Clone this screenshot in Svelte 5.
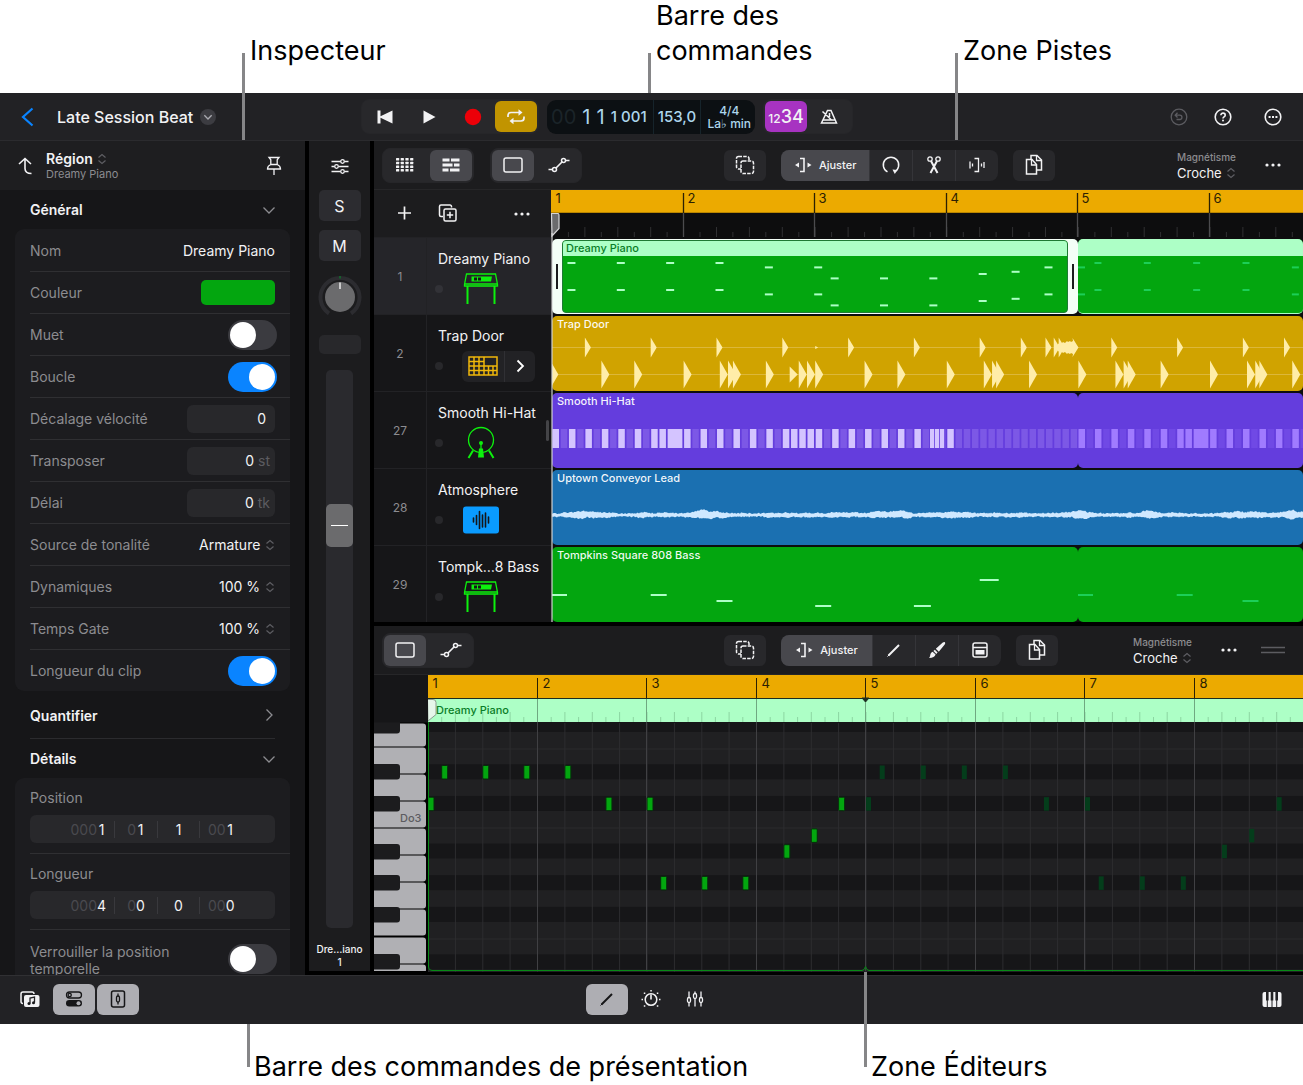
<script lang="ts">
	type Note = [step: number, row: number];

	// width of one sixteenth in the tracks area and in the piano roll
	const STEP = 8.225;
	const ROLL_STEP = 6.844;
	const ROLL_ROW = 15.84;
	const LOOP = 64;

	const piano: Note[] = [
		[0, 2], [2, 0], [8, 0], [14, 0], [20, 0], [26, 2], [32, 2],
		[34, 7], [40, 7], [46, 7], [52, 5], [56, 4], [60, 2]
	];
	const bass = [
		{ step: 0, y: 47, w: 15 },
		{ step: 12, y: 47, w: 16 },
		{ step: 20, y: 53, w: 16 },
		{ step: 32, y: 58, w: 16 },
		{ step: 44, y: 58, w: 17 },
		{ step: 52, y: 32, w: 19 }
	];
	const snare = [4, 12, 20, 28, 36, 44, 52, 57, 60, 61, 61.6, 68, 76, 84, 89];
	const kick = [
		-0.2, 6, 10, 16, 20.4, 21.4, 22, 26, 30, 31, 32, 38, 42, 48, 52.5, 53.5, 54, 58, 64,
		68.5, 69.5, 70, 74, 80, 84.5, 85.5, 86, 90
	];
	const accents = [13, 15, 29, 31];

	const hats = Array.from({ length: LOOP }, (_, s) => ({
		x: s * STEP + 0.5,
		w: s === 14 ? 14 : 6.5,
		loud: s <= 48 && s !== 46 && (s % 2 === 0 || accents.includes(s))
	}));

	function noise(n: number) {
		const v = Math.sin(n * 127.1 + 3.7) * 43758.5453;
		return v - Math.floor(v);
	}

	function swell(x: number, size: number) {
		const i = Math.floor(x / size);
		const t = x / size - i;
		return noise(i) * (1 - t) + noise(i + 1) * t;
	}

	const wave = (() => {
		const up: string[] = [];
		const down: string[] = [];
		for (let x = 0; x <= 1800; x += 1) {
			const env = swell(x, 13) * swell(x + 900, 31) * 6;
			const top = 0.8 + env * (0.3 + swell(x + 40, 6) * 0.7) + noise(x) * 1.4;
			const bottom = 0.8 + env * (0.2 + swell(x + 70, 5) * 0.7) + noise(x + 5000) * 1.4;
			up.push(`${x},${(45 - top).toFixed(1)}`);
			down.unshift(`${x},${(45 + bottom).toFixed(1)}`);
		}
		return up.concat(down).join(' ');
	})();

	const tracks = [
		{ no: 1, name: 'Dreamy Piano', art: 'keys' },
		{ no: 2, name: 'Trap Door', art: 'pads' },
		{ no: 27, name: 'Smooth Hi-Hat', art: 'drum' },
		{ no: 28, name: 'Atmosphere', art: 'audio' },
		{ no: 29, name: 'Tompk…8 Bass', art: 'keys' }
	];

	const darkRows = [-3, 0, 2, 5, 7, 9, 12];
	const whiteKeys = [720, 747, 774, 801, 828, 855, 882, 909, 937, 964];
	const blackKeys = [718, 764, 796, 844, 875, 907, 954];

	let timelineWidth = $state(752);
	let rollWidth = $state(875);
	let bars = $derived(range((timelineWidth - 14) / (16 * STEP)));
	let rollBars = $derived(range((rollWidth - 14) / (16 * ROLL_STEP)));
	let eighths = $derived(range(timelineWidth / (2 * STEP)));
	let rollEighths = $derived(range(rollWidth / (2 * ROLL_STEP)));

	let mute = $state(false);
	let loop = $state(true);
	let clipLength = $state(true);
	let lock = $state(false);
	let volume = $state(74);
	let pan = $state(0);

	function range(n: number) {
		return Array.from({ length: Math.max(1, Math.ceil(n)) }, (_, i) => i);
	}
</script>

{#snippet icon(name: string)}
	<svg class="icon" viewBox="0 0 24 24" aria-hidden="true">
		{#if name === 'back'}
			<path d="M17.500 3.500 8 12l9.500 8.500" stroke-width="2.2" />
		{:else if name === 'turn-up'}
			<path d="M11 4.500v10c0 3.200 2 5 6.500 5M5 10l6-5.500 6 5.500" stroke-width="1.600" />
		{:else if name === 'pin'}
			<path d="M7 3.500h10l-1.800 2.300v4.700c2.300 1 3.300 2.400 3.300 4.500h-13c0-2.100 1-3.500 3.300-4.500V5.800zM8.500 10.500h7M12 15v6" />
		{:else if name === 'down'}
			<path d="m6.500 9.500 5.500 5.500 5.500-5.500" />
		{:else if name === 'right'}
			<path d="m9.500 6.500 5.500 5.500-5.500 5.500" />
		{:else if name === 'prev'}
			<path class="solid" d="M4.500 5.500h3v5.800l12-5.800v13l-12-5.800v5.800h-3z" />
		{:else if name === 'play'}
			<path class="solid" d="M6.500 5.500v13l12-6.500z" />
		{:else if name === 'record'}
			<circle class="solid" cx="12" cy="12" r="8.200" />
		{:else if name === 'cycle'}
			<path d="M4 12V10.500c0-2 1-3 3-3h9M20 11.500V13c0 2-1 3-3 3H8" stroke-width="1.700" />
			<path class="solid" d="M14.500 4.300v6.400l4-3.200zM9.500 12.800v6.400l-4-3.200z" />
		{:else if name === 'metronome'}
			<path d="M10.500 5.500h3.500l5.500 12.500H4.500zM6 15h12.500M5.500 6.500l9 8.500M12.500 8v4" stroke-width="1.500" />
		{:else if name === 'undo'}
			<circle cx="12" cy="12" r="7.800" />
			<path d="M9.500 14.500h3.300a2 2 0 0 0 0-4.300H8.500M10.500 7.800l-2.300 2.400 2.300 2.300" />
		{:else if name === 'help'}
			<circle cx="12" cy="12" r="7.800" stroke-width="1.600" />
			<path d="M9.900 10.200c0-2.800 4.300-2.700 4.300 0 0 1.700-2.200 1.600-2.200 3.200" stroke-width="1.600" />
			<circle class="solid" cx="12" cy="15.600" r="1" />
		{:else if name === 'more-circle'}
			<circle cx="12" cy="12" r="7.800" stroke-width="1.600" />
			<path class="solid" d="M7.600 11h2v2h-2zM11 11h2v2h-2zM14.400 11h2v2h-2z" />
		{:else if name === 'more'}
			<circle class="solid" cx="6" cy="12" r="1.600" />
			<circle class="solid" cx="12" cy="12" r="1.600" />
			<circle class="solid" cx="18" cy="12" r="1.600" />
		{:else if name === 'mixer'}
			<path d="M3.500 7.500h9M16.500 7.500h4M3.500 12.500h3M10.500 12.500h10M3.500 17.500h9M16.500 17.500h4" />
			<circle cx="14.500" cy="7.500" r="1.800" />
			<circle cx="8.500" cy="12.500" r="1.800" />
			<circle cx="14.500" cy="17.500" r="1.800" />
		{:else if name === 'grid'}
			{#each [0, 1, 2, 3] as r}
				{#each [0, 1, 2, 3] as c}
					<rect class="solid" x={3 + c * 4.700} y={5 + r * 3.700} width="3.200" height="2.500" rx="0.500" />
				{/each}
			{/each}
		{:else if name === 'bricks'}
			<path class="solid" d="M3.500 5.500h7v3h-7zM12 5.500h8.500v3H12zM3.500 10.500h10v3h-10zM15 10.500h5.500v3H15zM3.500 15.500h6v3h-6zM11 15.500h9.500v3H11z" />
		{:else if name === 'region'}
			<rect x="3" y="5" width="18" height="14" rx="2" stroke-width="1.500" />
		{:else if name === 'curve'}
			<path d="M1.500 16.500h4M9 15l6.500-6.500M18.500 7.500h4" stroke-width="1.600" />
			<circle cx="7.500" cy="16.500" r="2" stroke-width="1.500" />
			<circle cx="16.500" cy="7.500" r="2" stroke-width="1.500" />
		{:else if name === 'marquee'}
			<rect x="3.500" y="3.500" width="12.500" height="12.500" rx="2" stroke-width="1.500" stroke-dasharray="3.500 1.200" />
			<rect class="cover" x="8" y="8" width="12.500" height="12.500" rx="2" stroke-width="1.500" stroke-dasharray="3.500 1.200" />
		{:else if name === 'trim'}
			<path d="M10 5.500h4v13h-4" stroke-width="1.600" />
			<path class="solid" d="M9 9.500v5L5 12zM17.500 9.500v5l4-2.500z" />
		{:else if name === 'arc'}
			<path d="M8.500 18.800a7.700 7.700 0 1 1 7 0" stroke-width="1.500" />
			<path class="solid" d="m13.500 16.500 4.800.500-2.500 4z" />
		{:else if name === 'scissors'}
			<circle cx="8" cy="6" r="2.200" />
			<circle cx="16" cy="6" r="2.200" />
			<path d="M9 8l6.500 12M15 8 8.500 20" stroke-width="2" />
		{:else if name === 'split'}
			<path d="M9.500 5.500h4v13h-4M5 8.500v7M16.500 10.500v3M19 9v6M7.500 10.500v3" />
		{:else if name === 'copy'}
			<path class="cover" d="M9 2.500h6l4.500 4.500v10H9z" stroke-width="1.500" />
			<path d="M14.500 2.500V7.500h5" />
			<path class="cover" d="M4.500 6.500H10l4.500 5v9.500h-10z" stroke-width="1.500" />
			<path d="M9.500 6.500V12h5" />
		{:else if name === 'plus'}
			<path d="M12.500 4.500v13M6 11h13" stroke-width="1.700" />
		{:else if name === 'duplicate'}
			<path d="M7 14.500H5a1.500 1.500 0 0 1-1.500-1.500V4.500A1.500 1.500 0 0 1 5 3h9a1.500 1.500 0 0 1 1.500 1.500v1" stroke-width="1.500" />
			<rect x="8" y="7" width="12" height="12" rx="1.500" stroke-width="1.500" />
			<path d="M14 9.800v6.400M10.800 13h6.400" stroke-width="1.500" />
		{:else if name === 'pencil'}
			<path d="M6.500 17.500 17 7" stroke-width="2" />
			<path d="m5.500 18.500 2-2" stroke-width="1" />
		{:else if name === 'brush'}
			<path class="solid" d="M19.500 4c1 .6.900 1.500 0 2.800l-5.700 7-3-3 7-6.200c.7-.6 1.200-.8 1.700-.6zM9.800 11.700l2.800 2.900-1.300 1.400-2.900-3zM7.600 13.700l3 2.900c-.8 2.200-2.600 3.400-6.600 3.400 1-1 1-1.800 1.300-3.300.3-1.600 1.200-2.500 2.300-3z" />
		{:else if name === 'velocity'}
			<rect x="5" y="5" width="14" height="14" rx="2" stroke-width="1.500" />
			<path d="M5 9.500h14" />
			<path class="solid" d="M7.500 12h9v4.500h-9z" />
		{:else if name === 'grip'}
			<path d="M0 9.500h24M0 14.500h24" />
		{:else if name === 'browser'}
			<path d="M5 16.500c-1.200 0-2-.7-2-2V7c0-1.200.8-2 2-2h9c1.200 0 2 .8 2 2" stroke-width="1.500" />
			<rect class="solid" x="6" y="8" width="15.500" height="12" rx="2" />
			<path class="cut" d="M12 16.500v-5.500l4.500-1v5.500" />
			<circle class="ink" cx="11" cy="16.600" r="1.500" />
			<circle class="ink" cx="15.500" cy="15.700" r="1.500" />
		{:else if name === 'switches'}
			<rect x="4.500" y="5" width="15" height="6" rx="3" />
			<circle cx="7.700" cy="8" r="1.600" />
			<rect class="solid" x="4" y="13" width="16" height="6.500" rx="3.200" />
			<circle class="hole" cx="16.500" cy="16.200" r="2" />
		{:else if name === 'strip'}
			<rect x="5.500" y="4" width="13" height="16" rx="2" stroke-width="1.500" />
			<path d="M12 6.500V9M12 15v2.500" />
			<rect x="10.500" y="9" width="3" height="6" rx="1.500" />
		{:else if name === 'dial'}
			<circle cx="12" cy="12.500" r="5.800" stroke-width="1.500" />
			<path d="M12 7.500v5" stroke-width="1.600" />
			<path class="solid" d="M11.300 3h1.500v1.500h-1.500zM4.800 5.500h1.500V7H4.800zM17.800 5.500h1.500V7h-1.500zM2.500 11.800H4v1.500H2.500zM20 11.800h1.500v1.500H20zM4.800 18.300h1.500v1.500H4.800zM17.800 18.300h1.500v1.500h-1.500z" />
		{:else if name === 'faders'}
			<path d="M6 4.500v6M6 15.500v4M12 4.500v2.500M12 11.500v8M18 4.500v6M18 15.500v4" />
			<rect x="4.500" y="10.500" width="3" height="5" rx="1.500" />
			<rect x="10.500" y="6.500" width="3" height="5" rx="1.500" />
			<rect x="16.500" y="10.500" width="3" height="5" rx="1.500" />
		{:else if name === 'piano'}
			<rect class="solid" x="2.500" y="5" width="19" height="15" rx="2" />
			<path class="cut" d="M7.300 5v8.500M12 5v8.500M16.700 5v8.500" stroke-width="2.600" />
			<path class="cut" d="M7.300 5v15M12 5v15M16.700 5v15" stroke-width="1" />
		{/if}
	</svg>
{/snippet}

{#snippet updown()}
	<svg class="updown" viewBox="0 0 10 12" aria-hidden="true">
		<path d="m1.500 4.500 3.500-3 3.500 3M1.500 7.500l3.500 3 3.500-3" />
	</svg>
{/snippet}

{#snippet snap(id: string)}
	<div class="snap">
		<label for={id}>Magnétisme</label>
		<span class="picker">
			<select {id}><option>Croche</option></select>
			{@render updown()}
		</span>
	</div>
{/snippet}

{#snippet art(kind: string)}
	{#if kind === 'keys'}
		<svg class="art synth" viewBox="0 0 36 34" aria-hidden="true">
			<path d="M3.500 2h29l2 10.500v1.500H1.500v-1.500zM1.500 12h33" />
			<path class="solid" d="M8.500 4.500h20.500l-1 5H8.500z" />
			<path class="ink" d="M11 5.500h3v3h-3zM15 5.500h3v3h-3z" />
			<path d="M4.500 14v18M31.500 14v18" stroke-width="2" />
		</svg>
	{:else if kind === 'drum'}
		<svg class="art synth" viewBox="0 0 36 34" aria-hidden="true">
			<circle cx="18" cy="14" r="12.500" />
			<path d="M10 24.500 5.500 32M26 24.500l4.500 7.500" stroke-width="2" />
			<circle class="solid" cx="18" cy="17" r="2" />
			<path d="M18 17v8" />
			<path class="solid" d="M16 22.500h4l1 9h-6z" />
		</svg>
	{:else if kind === 'audio'}
		<svg class="art" viewBox="0 0 36 34" aria-hidden="true">
			<rect class="tile" x="0" y="3.500" width="36" height="27" rx="3" />
			<path class="bars" d="M10.500 15v4M13.500 12.500v9M16.500 8.500v17M19.500 12v12M22.500 10v14M25.500 14v6" />
		</svg>
	{/if}
{/snippet}

<div class="page">
	<div class="callouts top">
		<span class="callout long">Inspecteur</span>
		<span class="callout">Barre des<br />commandes</span>
		<span class="callout long">Zone Pistes</span>
	</div>

	<main class="app">
		<header class="control-bar">
			<button class="back" aria-label="Retour">{@render icon('back')}</button>
			<button class="project">
				<span>Late Session Beat</span>
				<span class="round">{@render icon('down')}</span>
			</button>
			<i class="space-6"></i>
			<div class="group">
				<button class="tool" aria-label="Début">{@render icon('prev')}</button>
				<button class="tool" aria-label="Lecture">{@render icon('play')}</button>
				<button class="tool rec" aria-label="Enregistrer">{@render icon('record')}</button>
				<button class="tool cycle" aria-label="Cycle">{@render icon('cycle')}</button>
			</div>
			<div class="lcd">
				<span class="beat"><span class="faint">00</span><span>1</span><span>1</span></span>
				<span class="sub">1 001</span>
				<span class="tempo">153,0</span>
				<span class="sig"><span>4/4</span><span>La♭ min</span></span>
			</div>
			<div class="group">
				<button class="tool count" aria-label="Décompte"><small>12</small>34</button>
				<button class="tool" aria-label="Métronome">{@render icon('metronome')}</button>
			</div>
			<i class="space-13"></i>
			<div class="corner">
				<button class="dim" aria-label="Annuler">{@render icon('undo')}</button>
				<button aria-label="Aide">{@render icon('help')}</button>
				<button class="settings" aria-label="Réglages">{@render icon('more-circle')}</button>
			</div>
		</header>

		<div class="work">
			<aside class="inspector">
				<div class="inspector-head">
					<button aria-label="Remonter">{@render icon('turn-up')}</button>
					<div class="what">
						<button class="kind">Région {@render updown()}</button>
						<span>Dreamy Piano</span>
					</div>
					<button aria-label="Épingler">{@render icon('pin')}</button>
				</div>
				<button class="section">Général {@render icon('down')}</button>
				<div class="card">
					<div class="row">
						<label for="nom">Nom</label>
						<input id="nom" class="plain" value="Dreamy Piano" />
					</div>
					<div class="row">
						<span>Couleur</span>
						<button class="swatch" aria-label="Couleur"></button>
					</div>
					<div class="row">
						<label for="muet">Muet</label>
						<input id="muet" type="checkbox" class="switch" bind:checked={mute} />
					</div>
					<div class="row">
						<label for="boucle">Boucle</label>
						<input id="boucle" type="checkbox" class="switch" bind:checked={loop} />
					</div>
					<div class="row">
						<label for="velocite">Décalage vélocité</label>
						<span class="field wide"><input id="velocite" value="0" /></span>
					</div>
					<div class="row">
						<label for="transposer">Transposer</label>
						<span class="field"><input id="transposer" value="0" />st</span>
					</div>
					<div class="row">
						<label for="delai">Délai</label>
						<span class="field"><input id="delai" value="0" />tk</span>
					</div>
					<div class="row">
						<label for="source">Source de tonalité</label>
						<span class="picker">
							<select id="source"><option>Armature</option></select>
							{@render updown()}
						</span>
					</div>
					<div class="row">
						<label for="dyn">Dynamiques</label>
						<span class="picker">
							<select id="dyn"><option>100 %</option></select>
							{@render updown()}
						</span>
					</div>
					<div class="row">
						<label for="gate">Temps Gate</label>
						<span class="picker">
							<select id="gate"><option>100 %</option></select>
							{@render updown()}
						</span>
					</div>
					<div class="row">
						<label for="clip">Longueur du clip</label>
						<input id="clip" type="checkbox" class="switch" bind:checked={clipLength} />
					</div>
				</div>
				<button class="section ruled">Quantifier {@render icon('right')}</button>
				<button class="section">Détails {@render icon('down')}</button>
				<div class="card">
					{#each [{ name: 'Position', v: ['1', '1', '1', '1'] }, { name: 'Longueur', v: ['4', '0', '0', '0'] }] as f}
						<fieldset class="stack">
							<legend>{f.name}</legend>
							<div class="digits">
								{#each ['000', '0', '', '00'] as pad, i}
									<label>{pad}<input aria-label="{f.name} {i + 1}" value={f.v[i]} /></label>
								{/each}
							</div>
						</fieldset>
					{/each}
					<div class="row tall">
						<label for="verrou">Verrouiller la position temporelle</label>
						<input id="verrou" type="checkbox" class="switch" bind:checked={lock} />
					</div>
				</div>
			</aside>

			<section class="channel">
				<button class="mix" aria-label="Console">{@render icon('mixer')}</button>
				<button class="letter">S</button>
				<button class="letter">M</button>
				<label class="knob">
					<svg viewBox="0 0 44 44" aria-hidden="true">
						<path class="ring" d="M11 38.500a19.500 19.500 0 1 1 22 0" />
						<circle cx="22" cy="22" r="15" />
						<path class="zero" d="M22 1v2.500" />
						<path class="hand" d="M22 7.500v6.500" />
					</svg>
					<input type="range" min="-64" max="63" aria-label="Panoramique" bind:value={pan} />
				</label>
				<span class="meter"></span>
				<input class="fader" type="range" aria-label="Volume" bind:value={volume} />
				<span class="strip-name">Dre…iano<br />1</span>
			</section>

			<div class="areas">
				<section class="tracks">
					<div class="toolbar">
						<div class="group">
							<button class="tool" aria-label="Live Loops">{@render icon('grid')}</button>
							<button class="tool on" aria-label="Pistes">{@render icon('bricks')}</button>
						</div>
						<div class="group second">
							<button class="tool on" aria-label="Régions">{@render icon('region')}</button>
							<button class="tool" aria-label="Automatisation">{@render icon('curve')}</button>
						</div>
						<i class="space-7"></i>
						<button class="tool solo" aria-label="Sélection multiple">{@render icon('marquee')}</button>
						<div class="segments">
							<button class="tool adjust on">{@render icon('trim')} Ajuster</button>
							<button class="tool" aria-label="Boucle">{@render icon('arc')}</button>
							<button class="tool" aria-label="Scinder">{@render icon('scissors')}</button>
							<button class="tool" aria-label="Étirer">{@render icon('split')}</button>
						</div>
						<button class="tool solo" aria-label="Copier">{@render icon('copy')}</button>
						<i class="space-6"></i>
						{@render snap('snap-tracks')}
						<button class="more" aria-label="Plus">{@render icon('more')}</button>
					</div>

					<div class="arrange">
						<div class="heads">
							<div class="heads-bar">
								<button aria-label="Ajouter une piste">{@render icon('plus')}</button>
								<button aria-label="Dupliquer la piste">{@render icon('duplicate')}</button>
								<button aria-label="Plus">{@render icon('more')}</button>
							</div>
							{#each tracks as track (track.no)}
								<div class="head" class:selected={track.no === 1}>
									<span class="no">{track.no}</span>
									<div class="track">
										<span class="name">{track.name}</span>
										<div class="instrument">
											<span class="dot"></span>
											{#if track.art === 'pads'}
												<span class="kit">
													<button aria-label="Batterie">
														<svg viewBox="0 0 30 20" aria-hidden="true">
															<path d="M1 1h28v18H1zM1 5.500h15M1 10h15M1 14.500h28M6 1v18M11 1v18M16 1v18M16 10h13M20.500 10v9M25 10v9" stroke-width="1.500" />
														</svg>
													</button>
													<button aria-label="Ouvrir la pile">{@render icon('right')}</button>
												</span>
											{:else}
												{@render art(track.art)}
											{/if}
										</div>
									</div>
								</div>
							{/each}
							<span class="resize"></span>
						</div>

						<div class="timeline" bind:clientWidth={timelineWidth}>
							<svg class="ruler" role="img" aria-label="Règle">
								<rect class="gold" width="100%" height="23" />
								<path class="gold-edge" d="M0 22.500h4000" />
								{#each eighths as e}
									<path class="tick" d="M{(e * 2 * STEP + 1).toFixed(1)} 47v-{e % 2 ? 5 : 10}" />
								{/each}
								{#each bars as b}
									{@const x = Math.round(b * 16 * STEP) + 0.5}
									{#if b}
										<path class="bar-dark" d="M{x} 3v20" />
										<path class="bar-light" d="M{x} 23v24" />
									{/if}
									<text x={x + 4} y="13">{b + 1}</text>
								{/each}
							</svg>

							<div class="lane">
								<div class="region selected" style:width="{LOOP * STEP}px">
									<i class="edge"></i>
									<div class="midi">
										<span class="title">Dreamy Piano</span>
										<svg aria-hidden="true">
											{#each piano.slice(1) as [s, r]}
												<rect class="note" x={s * STEP - 12} y={6 + r * 2.2} width="8" height="2" />
												<rect class="note" x={s * STEP - 12} y={33 + r * 2.2} width="8" height="2" />
											{/each}
										</svg>
									</div>
									<i class="edge"></i>
								</div>
								<div class="region green looped">
									<span class="title"></span>
									<svg aria-hidden="true">
										{#each piano as [s, r]}
											<rect class="echo" x={s * STEP} y={6 + r * 2.2} width="7" height="2" />
											<rect class="echo" x={s * STEP} y={33 + r * 2.2} width="7" height="2" />
										{/each}
									</svg>
								</div>
							</div>

							<div class="lane">
								<div class="region gold-region">
									<svg aria-hidden="true">
										<path class="axis" d="M0 31.500h4000M0 58.500h4000" />
										{#each snare as s}
											<path class="hit" d="M{s * STEP} 21.500v20l6-10z" />
										{/each}
										<path class="hit" d="M{32 * STEP} 30v3l3-1.500zM506 28l2-1 1 1 2-2 2 1 2-2 1 1 2-1 1 1 2-1-.500-3 6 9.500-6 9.500.500-3-2-1-1 1-2-1-1 1-2-2-2 1-2-2-1 1-2-1z" />
										{#each kick as s}
											<path class="hit" d="M{s * STEP} 44.500v28l8-14z" />
										{/each}
										<path class="hit" d="M{28.9 * STEP} 50.500v16l8-8z" />
									</svg>
									<span class="title">Trap Door</span>
								</div>
							</div>

							<div class="lane">
								<div class="region violet" style:width="{LOOP * STEP}px">
									<svg aria-hidden="true">
										{#each hats as h}
											<rect class={h.loud ? 'loud' : 'soft'} x={h.x} y="36" width={h.w} height="19" />
										{/each}
										<path class="loud" d="M378 36h4v19h-4zM383 36h4v19h-4zM388 36h4v19h-4z" />
									</svg>
									<span class="title">Smooth Hi-Hat</span>
								</div>
								<div class="region violet rest">
									<svg aria-hidden="true">
										{#each hats as h}
											<rect class={h.loud ? 'mid' : 'low'} x={h.x} y="36" width={h.w} height="19" />
										{/each}
									</svg>
								</div>
							</div>

							<div class="lane">
								<div class="region blue">
									<svg aria-hidden="true"><polygon points={wave} /></svg>
									<span class="title">Uptown Conveyor Lead</span>
								</div>
							</div>

							<div class="lane">
								<div class="region green" style:width="{LOOP * STEP}px">
									<svg aria-hidden="true">
										{#each bass as n}
											<rect class="note" x={n.step * STEP} y={n.y} width={n.w} height="2" />
										{/each}
									</svg>
									<span class="title">Tompkins Square 808 Bass</span>
								</div>
								<div class="region green rest">
									<svg aria-hidden="true">
										{#each bass as n}
											<rect class="echo" x={n.step * STEP} y={n.y} width={n.w} height="2" />
										{/each}
									</svg>
								</div>
							</div>

							<svg class="playhead" viewBox="0 0 9 409" aria-hidden="true">
								<path class="grab" d="M.5 .500h6a1.500 1.500 0 0 1 1.500 1.500v13.500L1 23z" />
								<path d="M1 20v389" />
							</svg>
						</div>
					</div>
				</section>

				<section class="editor">
					<div class="toolbar">
						<div class="group">
							<button class="tool on" aria-label="Notes">{@render icon('region')}</button>
							<button class="tool" aria-label="Automatisation">{@render icon('curve')}</button>
						</div>
						<i class="space-10"></i>
						<button class="tool solo" aria-label="Sélection multiple">{@render icon('marquee')}</button>
						<div class="segments">
							<button class="tool adjust on">{@render icon('trim')} Ajuster</button>
							<button class="tool" aria-label="Crayon">{@render icon('pencil')}</button>
							<button class="tool" aria-label="Pinceau">{@render icon('brush')}</button>
							<button class="tool" aria-label="Vélocité">{@render icon('velocity')}</button>
						</div>
						<button class="tool solo" aria-label="Copier">{@render icon('copy')}</button>
						<i class="space-3"></i>
						{@render snap('snap-editor')}
						<button class="more" aria-label="Plus">{@render icon('more')}</button>
						<span class="grip">{@render icon('grip')}</span>
					</div>

					<div class="roll">
						<svg class="keyboard" viewBox="374 675 54 297" role="img" aria-label="Clavier">
							<rect class="void" x="374" y="722" width="54" height="250" />
							{#each whiteKeys as y}
								<path class="white" d="M374 {Math.max(y, 723) + 0.5}h49a3 3 0 0 1 3 3V{Math.min(y + 23.5, 970)}a3 3 0 0 1-3 3h-49z" />
							{/each}
							{#each blackKeys as y}
								<path class="black" d="M374 {y}h23a3 3 0 0 1 3 3v9.500a3 3 0 0 1-3 3h-23z" />
							{/each}
							<rect class="blank" x="374" y="675" width="54" height="47.500" />
							<rect class="void" x="374" y="971" width="54" height="2" />
							<text x="400" y="822">Do3</text>
						</svg>
						<div class="grid" bind:clientWidth={rollWidth}>
							<svg class="notes" role="img" aria-label="Éditeur Piano Roll">
								<rect class="gold" width="100%" height="23" />
								<rect class="floor" y="47" width="100%" height="250" />
								{#each darkRows as r}
									<rect class="dark" y={Math.max(47, 89.3 + r * ROLL_ROW)} width="100%" height={r < 0 ? 10 : 15} />
								{/each}
								<path class="octave" d="M0 74h4000M0 153h4000M0 264h4000" />
								<rect class="mint" y="23.500" width="100%" height="23.500" />
								{#each rollEighths as e}
									{@const x = (e * 2 * ROLL_STEP).toFixed(1)}
									{#if e % 2}
										<path class="mint-tick" d="M{x} 47v-5" />
									{:else}
										<path class="mint-tick" d="M{x} 47v-10" />
										<path class="beat-line" d="M{x} 48v249" />
									{/if}
								{/each}
								{#each rollBars as b}
									{@const x = Math.round(b * 16 * ROLL_STEP) - 0.5}
									{#if b}
										<path class="bar-dark" d="M{x} 3v20" />
										<path class="mint-bar" d="M{x} 23v24" />
										<path class="roll-bar" d="M{x} 47v249" />
									{/if}
									<text x={x + 5} y="13">{b + 1}</text>
								{/each}
								<path class="rim" d="M0 23.500h4000" />
								{#each piano as [s, r]}
									<rect class="played" x={s * ROLL_STEP} y={90.5 + r * ROLL_ROW} width="6" height="13.500" rx="1" />
									<rect class="ghost" x={(s + LOOP) * ROLL_STEP} y={90.5 + r * ROLL_ROW} width="5" height="13.500" />
								{/each}
								<path class="rim" d="M434 23l3.500 4 3.500-4z" />
								<path class="outline" d="M.5 47v245a3.500 3.500 0 0 0 3.500 3.500h430q2.500 0 3.500-4 1 4 3.500 4h4000" />
								<path class="flag" d="M-.5 24.500h5.500q3 0 3 3v12L0 46z" />
								<text class="clip" x="8" y="39">Dreamy Piano</text>
							</svg>
						</div>
					</div>
				</section>
			</div>
		</div>

		<footer class="view-bar">
			<div class="left">
				<button class="tool bare" aria-label="Navigateur">{@render icon('browser')}</button>
				<button class="tool lit" aria-label="Inspecteur">{@render icon('switches')}</button>
				<button class="tool lit" aria-label="Tranche de console">{@render icon('strip')}</button>
			</div>
			<div class="middle">
				<button class="tool lit" aria-label="Éditeurs">{@render icon('pencil')}</button>
				<button class="tool" aria-label="Commandes de module">{@render icon('dial')}</button>
				<button class="tool" aria-label="Table de mixage">{@render icon('faders')}</button>
			</div>
			<button class="tool bare" aria-label="Surface de jeu">{@render icon('piano')}</button>
		</footer>
	</main>

	<div class="callouts bottom">
		<span class="callout">Barre des commandes de présentation</span>
		<span class="callout long">Zone Éditeurs</span>
	</div>
</div>

<style>
	:global(body) {
		margin: 0;
		background: #fff;
	}
	.page {
		font-family: Inter, 'Liberation Sans', sans-serif;
		color: #f2f2f4;
		font-size: 14px;
		overflow: hidden;
	}
	button,
	input,
	select {
		font: inherit;
		color: inherit;
		margin: 0;
		padding: 0;
		border: 0;
		background: none;
	}
	button {
		display: flex;
		align-items: center;
		justify-content: center;
	}
	select {
		appearance: none;
	}
	svg {
		display: block;
		fill: none;
		stroke: currentColor;
		stroke-width: 1.3;
	}
	text {
		stroke: none;
		fill: #2b2003;
		font-size: 13px;
	}
	.icon {
		flex: none;
		width: 24px;
		height: 24px;
	}
	.solid {
		fill: currentColor;
		stroke: none;
	}
	.cover {
		fill: #242427;
	}
	.cut {
		stroke: #222225;
	}
	.ink {
		fill: #161618;
		stroke: none;
	}
	.hole {
		fill: #aeaeb3;
		stroke: none;
	}
	.updown {
		flex: none;
		width: 10px;
		height: 12px;
		stroke: #5e5e63;
		stroke-width: 1.2;
	}

	/* callouts */
	.callouts {
		display: grid;
		color: #000;
		font-size: 27px;
		line-height: 35px;
	}
	.callouts.top {
		grid-template: 68px / 406px 307px auto;
		align-items: end;
		padding: 0 0 25px 242px;
	}
	.callouts.bottom {
		grid-template-columns: 617px auto;
		padding: 25px 0 0 247px;
	}
	.callout {
		position: relative;
		padding-left: 8px;
		white-space: nowrap;
	}
	.bottom .callout {
		padding-left: 7px;
	}
	.callout::before {
		content: '';
		position: absolute;
		z-index: 5;
		left: 0;
		width: 3px;
		background: #868688;
	}
	.top .callout::before {
		bottom: -25px;
		height: 40px;
	}
	.top .long::before {
		bottom: -72px;
		height: 87px;
	}
	.bottom .callout::before {
		top: -25px;
		height: 43px;
	}
	.bottom .long::before {
		top: -77px;
		height: 95px;
	}

	/* shared controls */
	.group,
	.segments {
		display: flex;
		border-radius: 8px;
		background: #28282b;
	}
	.group {
		padding: 1px;
		border: 1px solid #262629;
	}
	.tool {
		width: 42px;
		height: 31px;
		border-radius: 6px;
	}
	.tool.on {
		background: #48484d;
	}
	.tool.solo {
		background: #28282b;
	}
	.tool.lit {
		background: #aeaeb3;
		color: #161618;
	}
	.segments {
		margin: 0 15px;
		overflow: hidden;
	}
	.segments .tool {
		width: 43px;
		border-radius: 0;
	}
	.segments .tool + .tool {
		border-left: 1px solid #353539;
	}
	.segments .adjust {
		width: 88px;
		gap: 5px;
		padding-right: 4px;
		font-size: 11px;
		font-weight: 500;
	}
	.editor .adjust {
		width: 91px;
	}
	.space-3 {
		flex: 3;
	}
	.space-6 {
		flex: 6;
	}
	.space-7 {
		flex: 7;
	}
	.space-10 {
		flex: 10;
	}
	.space-13 {
		flex: 13;
	}
	.picker {
		display: flex;
		align-items: center;
		gap: 4px;
	}
	.snap {
		display: flex;
		flex-direction: column;
		width: 84px;
		font-size: 13px;
		line-height: 16px;
	}
	.snap label {
		color: #8c8c90;
		font-size: 10px;
		font-weight: 500;
	}

	/* control bar */
	.control-bar {
		display: flex;
		align-items: center;
		box-sizing: border-box;
		height: 48px;
		padding: 0 18px 0 15px;
		background: #222225;
		border-bottom: 1px solid #2b2b2e;
	}
	.back {
		color: #0a84ff;
	}
	.project {
		gap: 7px;
		margin-left: 18px;
		font-size: 16px;
		font-weight: 500;
	}
	.round {
		border-radius: 50%;
		background: #3c3c41;
		color: #aaaab0;
	}
	.round :global(.icon) {
		width: 16px;
		height: 16px;
		stroke-width: 2;
	}
	.control-bar .group .tool {
		width: 44px;
	}
	.control-bar .group .cycle,
	.control-bar .group .count {
		width: 42px;
		background: #c19400;
	}
	.control-bar .group .count {
		background: #a733c1;
		font-size: 18px;
		font-weight: 500;
		align-items: baseline;
		line-height: 32px;
	}
	.count small {
		font-size: 12px;
	}
	.rec {
		color: #ec0008;
	}
	.lcd {
		display: flex;
		align-items: center;
		justify-content: space-between;
		box-sizing: border-box;
		width: 208px;
		height: 34px;
		margin: 0 8px;
		padding: 0 4px;
		border-radius: 9px;
		background: #0c1013;
		color: #add6ec;
		font-size: 15px;
		font-weight: 500;
		line-height: 34px;
		white-space: nowrap;
	}
	.beat {
		display: flex;
		gap: 6px;
		font-size: 20px;
		font-weight: 400;
	}
	.faint {
		color: #1b2429;
	}
	.tempo {
		padding: 0 4px;
		border: solid #16242b;
		border-width: 0 1px;
	}
	.sig {
		display: flex;
		flex-direction: column;
		align-items: center;
		font-size: 12px;
		line-height: 13px;
	}
	.corner {
		display: flex;
		gap: 20px;
	}
	.corner .dim {
		color: #5c5c61;
	}
	.settings {
		margin-left: 6px;
	}

	/* work area */
	.work {
		display: grid;
		grid-template-columns: 305px 61px minmax(0, 1fr);
		gap: 4px;
		background: #000;
	}
	.inspector {
		contain: size;
		overflow: hidden;
		background: #161618;
	}
	.inspector-head {
		display: flex;
		align-items: center;
		box-sizing: border-box;
		height: 49px;
		padding: 0 19px 0 14px;
		background: #1e1e20;
	}
	.what {
		flex: 1;
		padding-left: 8px;
		color: #8c8c90;
		font-size: 11px;
		line-height: 14px;
	}
	.kind {
		gap: 4px;
		color: #f2f2f4;
		font-size: 14px;
		font-weight: 600;
		line-height: 16px;
	}
	.section {
		width: 100%;
		height: 39px;
		padding: 0 24px 0 30px;
		justify-content: space-between;
		font-weight: 600;
	}
	.section :global(.icon) {
		color: #8c8c90;
	}
	.section.ruled {
		width: 245px;
		height: 48px;
		margin: 0 30px;
		padding: 1px 0 0;
		border-bottom: 1px solid #2b2b2e;
	}
	.section.ruled :global(.icon) {
		margin-right: -6px;
	}
	.card {
		margin: 0 15px;
		border-radius: 9px;
		background: #1c1c1f;
	}
	.row {
		display: flex;
		align-items: center;
		justify-content: space-between;
		box-sizing: border-box;
		height: 42px;
		margin-left: 15px;
		padding-right: 15px;
		color: #8c8c90;
		line-height: 17px;
	}
	.row + .row,
	.stack + .stack,
	.row.tall {
		border-top: 1px solid #2f2f32;
	}
	.row.tall {
		align-items: flex-start;
		height: 70px;
		padding-top: 13px;
	}
	.row.tall label {
		width: 160px;
	}
	.row.tall .switch {
		margin-top: 1px;
	}
	.plain {
		width: 140px;
		color: #f2f2f4;
		text-align: right;
	}
	.row select {
		color: #f2f2f4;
	}
	.swatch {
		width: 74px;
		height: 25px;
		border-radius: 5px;
		background: #03a60f;
	}
	.switch {
		appearance: none;
		width: 49px;
		height: 30px;
		margin-right: -2px;
		padding: 2px;
		box-sizing: border-box;
		border-radius: 15px;
		background: #3b3b40;
	}
	.switch::before {
		content: '';
		display: block;
		width: 26px;
		height: 26px;
		border-radius: 50%;
		background: #fff;
	}
	.switch:checked {
		background: #0a84ff;
	}
	.switch:checked::before {
		margin-left: auto;
	}
	.field {
		display: flex;
		align-items: center;
		gap: 4px;
		box-sizing: border-box;
		width: 88px;
		height: 28px;
		padding-right: 5px;
		border-radius: 6px;
		background: #28282b;
		color: #5c5c61;
	}
	.field.wide {
		padding-right: 9px;
	}
	.field input {
		flex: 1;
		min-width: 0;
		color: #f2f2f4;
		text-align: right;
	}
	.stack {
		min-width: 0;
		margin: 0 0 0 15px;
		padding: 0 15px 10px 0;
		border: 0;
		color: #8c8c90;
	}
	.stack legend {
		float: left;
		padding: 11px 0 8px;
		line-height: 18px;
	}
	.digits {
		clear: both;
		display: grid;
		grid-template-columns: 84px 43px 42px 1fr;
		align-items: center;
		height: 28px;
		border-radius: 6px;
		background: #28282b;
		color: #4a4a4f;
		line-height: 17px;
	}
	.digits label {
		display: flex;
		justify-content: flex-end;
		padding-right: 8px;
	}
	.digits label + label {
		border-left: 1px solid #39393d;
		padding-right: 12px;
	}
	.digits label:nth-child(3) {
		justify-content: center;
		padding: 0;
	}
	.digits label:last-child {
		justify-content: flex-start;
		padding-left: 8px;
	}
	.digits input {
		width: 9px;
		color: #f2f2f4;
		text-align: center;
	}

	/* channel strip */
	.channel {
		display: flex;
		flex-direction: column;
		align-items: center;
		margin-bottom: 4px;
		background: #1c1c1e;
	}
	.mix {
		height: 49px;
	}
	.letter {
		width: 42px;
		height: 31px;
		margin-bottom: 9px;
		border-radius: 5px;
		background: #2c2c30;
		font-size: 16px;
	}
	.knob {
		position: relative;
		width: 44px;
		height: 44px;
		margin: 5px 0 16px;
	}
	.knob input {
		position: absolute;
		inset: 0;
		width: 100%;
		opacity: 0;
	}
	.knob .ring {
		stroke: #2c2c30;
		stroke-width: 4;
	}
	.knob circle {
		fill: #6b6b6d;
		stroke: none;
	}
	.knob .zero {
		stroke: #0b7d2b;
	}
	.knob .hand {
		stroke: #fff;
	}
	.meter {
		width: 42px;
		height: 19px;
		margin-bottom: 16px;
		border-radius: 5px;
		background: #28282b;
	}
	.fader {
		appearance: none;
		writing-mode: vertical-lr;
		direction: rtl;
		width: 27px;
		flex: 1;
		min-height: 0;
		border-radius: 5px;
		background: #2a2a2e;
	}
	.fader::-webkit-slider-thumb {
		appearance: none;
		width: 27px;
		height: 43px;
		border-radius: 5px;
		background: linear-gradient(#fff, #fff) center / 17px 1px no-repeat #6b6b6d;
	}
	.strip-name {
		padding: 15px 0 2px;
		font-size: 10px;
		font-weight: 500;
		line-height: 13px;
		text-align: center;
	}

	/* areas */
	.areas {
		display: flex;
		flex-direction: column;
		gap: 4px;
		padding-bottom: 3px;
		min-width: 0;
	}
	.toolbar {
		display: flex;
		align-items: center;
		box-sizing: border-box;
		height: 49px;
		padding: 0 18px 0 8px;
		background: #1c1c1e;
		border-bottom: 1px solid #262628;
	}
	.toolbar .group {
		gap: 4px;
	}
	.second {
		margin-left: 16px;
	}
	.grip {
		margin-left: 20px;
		color: #5c5c61;
	}
	.arrange {
		display: grid;
		grid-template-columns: 177px minmax(0, 1fr);
	}
	.heads {
		position: relative;
		background: #161618;
	}
	.heads-bar {
		display: flex;
		align-items: center;
		height: 47px;
		padding: 0 17px 0 18px;
		background: #1c1c1e;
	}
	.heads-bar button + button {
		margin-left: 20px;
	}
	.heads-bar button:last-child {
		margin-left: auto;
	}
	.head {
		display: grid;
		grid-template-columns: 53px 1fr;
		box-sizing: border-box;
		height: 77px;
		border-top: 1px solid #222225;
	}
	.head.selected {
		background: #252529;
	}
	.no {
		display: flex;
		align-items: center;
		justify-content: center;
		border-right: 1px solid #222225;
		color: #8c8c90;
		font-size: 12px;
	}
	.track {
		padding: 11px 0 0 8px;
	}
	.name {
		display: block;
		padding-left: 3px;
		line-height: 20px;
		white-space: nowrap;
	}
	.instrument {
		display: flex;
		align-items: center;
		height: 40px;
	}
	.dot {
		width: 8px;
		height: 8px;
		border-radius: 50%;
		background: #28282b;
	}
	.selected .dot {
		background: #323237;
	}
	.art {
		width: 36px;
		height: 34px;
		margin-left: 20px;
	}
	.synth {
		color: #0df10d;
	}
	.tile {
		fill: #0a9bff;
		stroke: none;
	}
	.bars {
		stroke: #161618;
		stroke-width: 1.6;
		stroke-linecap: round;
	}
	.kit {
		display: flex;
		height: 31px;
		margin-left: 19px;
		border-radius: 6px;
		background: #222225;
	}
	.kit button {
		width: 42px;
		color: #efb70a;
	}
	.kit svg {
		width: 30px;
	}
	.kit button + button {
		width: 31px;
		border-left: 1px solid #303034;
		color: #fff;
	}
	.kit .icon {
		width: 24px;
		stroke-width: 1.8;
	}
	.resize {
		position: absolute;
		right: 2px;
		top: 230px;
		width: 3px;
		height: 21px;
		border-radius: 2px;
		background: #444447;
	}

	/* timeline */
	.timeline {
		position: relative;
		overflow: hidden;
		background: #0d0d0e;
	}
	.ruler {
		width: 100%;
		height: 47px;
	}
	.gold {
		fill: #ecaa00;
		stroke: none;
	}
	.gold-edge {
		stroke: #b98500;
		stroke-width: 1;
	}
	.tick {
		stroke: #303032;
		stroke-width: 1;
	}
	.bar-dark {
		stroke: #2b2003;
	}
	.bar-light {
		stroke: #4b4b4e;
	}
	.lane {
		display: flex;
		box-sizing: border-box;
		height: 77px;
		padding: 2px 0 0 1px;
	}
	.region {
		display: grid;
		flex: 1;
		height: 75px;
		border-radius: 5px;
		overflow: hidden;
		color: #fff;
	}
	.region[style] {
		flex: none;
	}
	.region > * {
		grid-area: 1 / 1;
	}
	.region svg {
		width: 100%;
		height: 75px;
		stroke: none;
	}
	.title {
		height: 16px;
		padding-left: 5px;
		font-size: 11px;
		font-weight: 500;
		line-height: 17px;
		color: #fffffff0;
	}
	.region.green {
		background: #03a60f;
	}
	.region.selected {
		display: flex;
		box-sizing: border-box;
		background: #f4fff7;
		padding: 1px 0;
	}
	.edge {
		width: 10px;
		background: linear-gradient(#1c1c1e, #1c1c1e) center / 2px 25px no-repeat;
	}
	.midi {
		flex: 1;
		box-sizing: border-box;
		border: 1px solid #1f7a34;
		border-radius: 4px;
		overflow: hidden;
		background: #03a60f;
	}
	.midi .title,
	.looped .title {
		display: block;
		padding-left: 3px;
		background: #adffc6;
		color: #0a7d28;
		line-height: 14px;
	}
	.midi .title {
		height: 15px;
	}
	.looped {
		grid-template-rows: 17px 1fr;
		box-sizing: border-box;
		border-bottom: 1px solid #adffc6;
	}
	.region.looped svg {
		grid-area: 2 / 1;
		height: 57px;
	}
	.looped .title {
		height: 17px;
	}
	.note {
		fill: #adffc6;
	}
	.echo {
		fill: #1ccf58;
	}
	.gold-region {
		background: #d0a300;
	}
	.axis {
		stroke: #dcb73a;
		stroke-width: 1;
	}
	.hit {
		fill: #ffeda8;
	}
	.violet {
		background: #643ddd;
	}
	.loud {
		fill: #d4c4ff;
	}
	.soft {
		fill: #7c58e6;
	}
	.mid {
		fill: #a07bff;
	}
	.low {
		fill: #7049e5;
	}
	.blue {
		background: #1b70b1;
	}
	.blue polygon {
		fill: #cfe8ff;
	}
	.playhead {
		position: absolute;
		left: 0;
		top: 23px;
		width: 9px;
		height: 409px;
		stroke: #d4d4d6;
		stroke-width: 1.2;
	}
	.grab {
		fill: #6b6b6d;
	}

	/* piano roll */
	.roll {
		display: grid;
		grid-template-columns: 54px minmax(0, 1fr);
	}
	.grid {
		min-width: 0;
	}
	.keyboard {
		width: 54px;
		height: 297px;
		stroke: none;
	}
	.blank {
		fill: #161618;
	}
	.void {
		fill: #000;
	}
	.white {
		fill: #b0b0b4;
	}
	.black {
		fill: #1c1c1e;
	}
	.keyboard text {
		fill: #5c5c61;
		font-size: 11px;
		font-weight: 500;
	}
	.notes {
		width: 100%;
		height: 297px;
		stroke-width: 1;
	}
	.floor {
		fill: #202022;
		stroke: none;
	}
	.dark {
		fill: #161618;
		stroke: none;
	}
	.octave {
		stroke: #2a2a2c;
	}
	.mint {
		fill: #adffc6;
		stroke: none;
	}
	.mint-tick {
		stroke: #8cd6a2;
	}
	.mint-bar {
		stroke: #6fa881;
	}
	.beat-line {
		stroke: #2d2d30;
	}
	.roll-bar {
		stroke: #404043;
	}
	.rim {
		fill: #1c2c20;
		stroke: #1c2c20;
	}
	.played {
		fill: #03a60f;
		stroke: #062d0b;
	}
	.ghost {
		fill: #043d1b;
		stroke: none;
	}
	.outline {
		stroke: #078a16;
	}
	.flag {
		fill: #e6f6ea;
		stroke: #8d9c91;
	}
	.clip {
		fill: #0a7d28;
		font-size: 11px;
		font-weight: 500;
	}

	/* view bar */
	.view-bar {
		display: grid;
		grid-template-columns: 1fr auto 1fr;
		align-items: center;
		box-sizing: border-box;
		height: 49px;
		padding: 0 10px 2px 9px;
		background: #222225;
		border-top: 1px solid #303033;
	}
	.left {
		display: flex;
		gap: 2px;
	}
	.middle {
		display: flex;
		gap: 2px;
	}
	.view-bar > .bare {
		justify-self: end;
	}
</style>
